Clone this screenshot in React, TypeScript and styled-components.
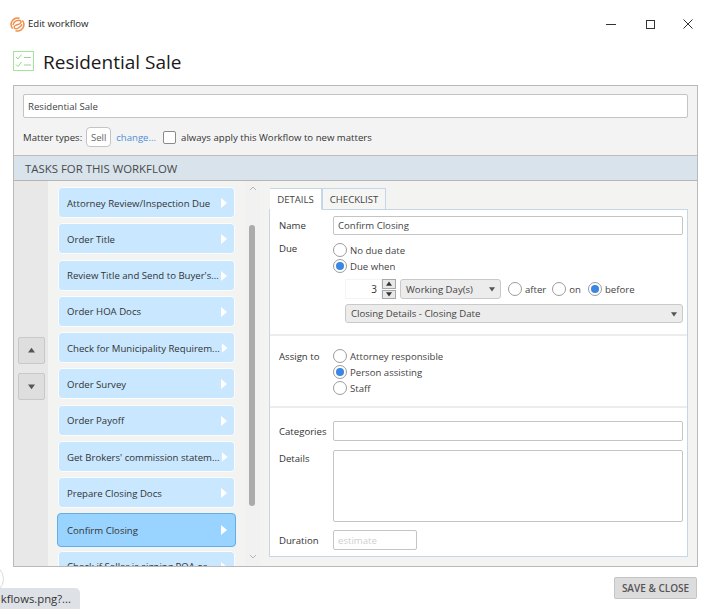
import React from "react";
import styled, { createGlobalStyle } from "styled-components";

const GlobalStyle = createGlobalStyle`
  html, body {
    margin: 0;
    padding: 0;
    background: #fff;
  }
  * {
    box-sizing: border-box;
  }
`;

const Window = styled.div`
  position: relative;
  width: 708px;
  height: 609px;
  overflow: hidden;
  background: #fff;
  color: #333;
  font-family: "Open Sans", "Noto Sans", sans-serif;
  font-size: 9.6px;
  display: flex;
  flex-direction: column;
`;

const TitleBar = styled.div`
  height: 48px;
  padding: 16px 15px 0 10px;
  display: flex;
  align-items: flex-start;
  gap: 3px;
`;

const TitleText = styled.div`
  flex: 1;
  font-size: 9.6px;
  line-height: 16px;
  color: #222;
`;

const WindowButtons = styled.div`
  display: flex;
  align-items: center;
  gap: 28.5px;
  height: 16px;
`;

const Heading = styled.div`
  height: 37px;
  padding: 0 0 9px 13px;
  display: flex;
  align-items: center;
  gap: 9px;
`;

const HeadingText = styled.h1`
  margin: 0;
  font-size: 19px;
  font-weight: 400;
  color: #1a1a1a;
`;

const HeadingIcon = styled.svg`
  flex: none;
  margin-bottom: 2px;
`;

const LogoIcon = styled.svg`
  flex: none;
  margin-top: 1px;
`;

const Panel = styled.div`
  margin-left: 13px;
  width: 685px;
  height: 482px;
  border: 1px solid #b9b9b9;
  background: #f3f3f1;
  display: flex;
  flex-direction: column;
  overflow: hidden;
`;

const PanelTop = styled.div`
  height: 69px;
  padding: 8px 9px 0;
  background: #f3f3f3;
`;

const TextInput = styled.div<{ $width?: number; $height?: number }>`
  width: ${({ $width }) => ($width ? `${$width}px` : "100%")};
  height: ${({ $height }) => $height || 20}px;
  flex: none;
  border: 1px solid #c4c4c4;
  border-radius: 2px;
  background: #fff;
  padding: 0 4px;
  display: flex;
  align-items: center;
  color: #444;
`;

const Placeholder = styled.span`
  color: #cfcfcf;
`;

const MatterRow = styled.div`
  margin-top: 9px;
  display: flex;
  align-items: center;
  height: 20px;
`;

const MatterTag = styled.div`
  margin-left: 4px;
  width: 25px;
  height: 20px;
  border: 1px solid #c4c4c4;
  border-radius: 4px;
  background: #fff;
  display: flex;
  align-items: center;
  justify-content: center;
  color: #666;
`;

const ChangeLink = styled.span`
  margin-left: 5px;
  color: #4f8fd6;
`;

const Checkbox = styled.div`
  margin: 0 5px 0 7px;
  width: 13px;
  height: 13px;
  border: 1px solid #8a8a8a;
  border-radius: 2px;
  background: #fff;
`;

const SectionHeader = styled.div`
  height: 26px;
  padding-left: 11px;
  display: flex;
  align-items: center;
  background: #d9e3ec;
  border-top: 1px solid #bdbdbd;
  border-bottom: 1px solid #b5b5b5;
  font-size: 11.4px;
  color: #4a4a4a;
`;

const Body = styled.div`
  flex: 1;
  min-height: 0;
  display: flex;
`;

const MoveColumn = styled.div`
  width: 34px;
  flex: none;
  background: #e8e8e8;
  padding: 156px 0 0 4px;
  display: flex;
  flex-direction: column;
  gap: 9px;
`;

const MoveButton = styled.div`
  width: 27px;
  height: 27px;
  border: 1px solid #c8c8c8;
  border-radius: 2px;
  background: #dedede;
  display: flex;
  align-items: center;
  justify-content: center;
`;

const TaskList = styled.div`
  width: 197px;
  flex: none;
  padding: 6px 0 0 10px;
  display: flex;
  flex-direction: column;
  gap: 5.3px;
  overflow: hidden;
`;

const TaskItem = styled.div<{ $selected?: boolean }>`
  width: ${({ $selected }) => ($selected ? 179 : 177)}px;
  height: ${({ $selected }) => ($selected ? 34 : 31)}px;
  margin: ${({ $selected }) => ($selected ? "-1px 0 -1px -1px" : "0")};
  flex: none;
  padding: 1px ${({ $selected }) => ($selected ? 6 : 5)}px 0 ${({ $selected }) => ($selected ? 9 : 8)}px;
  display: flex;
  align-items: center;
  justify-content: space-between;
  border: 1px solid ${({ $selected }) => ($selected ? "#62ade8" : "#fafcfe")};
  border-radius: 4px;
  background: ${({ $selected }) => ($selected ? "#99d3ff" : "#c9e8ff")};
  color: #333;
`;

const TaskName = styled.span`
  white-space: nowrap;
`;

const ScrollTrack = styled.div`
  position: relative;
  width: 15px;
  flex: none;
  background: #f1f1f1;
  display: flex;
  flex-direction: column;
  align-items: center;
  justify-content: space-between;
  padding: 5px 0 7px;
`;

const ScrollThumb = styled.div`
  position: absolute;
  top: 44px;
  left: 4px;
  width: 6px;
  height: 281px;
  border-radius: 3px;
  background: #ababab;
`;

const DetailColumn = styled.div`
  flex: 1;
  min-width: 0;
  padding: 7px 9px 9px 9px;
  display: flex;
  flex-direction: column;
`;

const Tabs = styled.div`
  display: flex;
  height: 22px;
  flex: none;
  margin-bottom: -1px;
  position: relative;
`;

const Tab = styled.div<{ $active?: boolean }>`
  width: ${({ $active }) => ($active ? 52 : 64)}px;
  margin-left: ${({ $active }) => ($active ? 1 : 0)}px;
  border: 1px solid #c5d6e6;
  border-left-width: ${({ $active }) => ($active ? 0 : 1)}px;
  border-bottom-color: ${({ $active }) => ($active ? "#fff" : "#c5d6e6")};
  background: ${({ $active }) => ($active ? "#fff" : "#f5f5f3")};
  display: flex;
  align-items: center;
  justify-content: center;
  color: #444;
`;

const DetailBox = styled.div`
  flex: 1;
  min-height: 0;
  border: 1px solid #c5d6e6;
  background: #fff;
  display: flex;
  flex-direction: column;
`;

const Section = styled.div<{ $height: number; $last?: boolean }>`
  height: ${({ $height }) => $height}px;
  flex: none;
  padding: 6px 4px 0 9px;
  border-bottom: ${({ $last }) => ($last ? "none" : "2px solid #ececec")};
`;

const Row = styled.div<{ $gap?: number }>`
  display: flex;
  margin-top: ${({ $gap }) => $gap || 0}px;
`;

const Label = styled.div<{ $top?: number }>`
  width: 54px;
  flex: none;
  line-height: 18px;
  color: #333;
  margin-top: ${({ $top }) => $top || 0}px;
`;

const RadioStack = styled.div`
  display: flex;
  flex-direction: column;
`;

const RadioOption = styled.div<{ $gap?: number }>`
  height: 16px;
  display: flex;
  align-items: center;
  gap: 3px;
  margin-right: ${({ $gap }) => $gap || 0}px;
  color: #444;
`;

const RadioCircle = styled.span<{ $checked?: boolean }>`
  width: 14px;
  height: 14px;
  flex: none;
  border: 1px solid #9c9c9c;
  border-radius: 50%;
  background: #fff;
  display: flex;
  align-items: center;
  justify-content: center;
  &::after {
    content: "";
    width: 8px;
    height: 8px;
    border-radius: 50%;
    background: ${({ $checked }) => ($checked ? "#3a86e0" : "transparent")};
  }
`;

const DueSettings = styled.div`
  margin: 5px 0 0 66px;
`;

const SpinRow = styled.div`
  height: 20px;
  display: flex;
  align-items: center;
`;

const SpinValue = styled.div`
  width: 37px;
  height: 20px;
  padding-right: 4px;
  background: #fff;
  border: 1px solid #f4f4f4;
  display: flex;
  align-items: center;
  justify-content: flex-end;
  font-size: 10px;
`;

const SpinButtons = styled.div`
  width: 14px;
  height: 20px;
  margin-right: 4px;
  display: flex;
  flex-direction: column;
  gap: 1px;
`;

const SpinButton = styled.div`
  flex: 1;
  border: 1px solid #a8a8a8;
  background: #e8e8e8;
  display: flex;
  align-items: center;
  justify-content: center;
`;

const SelectBox = styled.div<{ $width: number; $height?: number }>`
  width: ${({ $width }) => $width}px;
  height: ${({ $height }) => $height || 20}px;
  flex: none;
  padding: 0 5px;
  border: 1px solid #c9c9c9;
  border-radius: 3px;
  background: #ececec;
  display: flex;
  align-items: center;
  justify-content: space-between;
  color: #444;
`;

const TimingOptions = styled.div`
  margin-left: 7px;
  display: flex;
`;

const SecondSelect = styled.div`
  margin-top: 5px;
`;

const SaveRow = styled.div`
  margin-top: 10px;
  width: 697px;
  display: flex;
  justify-content: flex-end;
`;

const SaveButton = styled.div`
  width: 83px;
  height: 22px;
  border: 1px solid #c4c4c4;
  border-radius: 2px;
  background: #dcdcdc;
  display: flex;
  align-items: center;
  justify-content: center;
  font-size: 10px;
  font-weight: 600;
  color: #555;
`;

const StatusTip = styled.div`
  position: absolute;
  left: 0;
  bottom: 0;
  width: 80px;
  height: 21px;
  border-top-right-radius: 5px;
  background: #dee1e6;
  color: #333;
  font-size: 11.3px;
  line-height: 21px;
  white-space: nowrap;
  display: flex;
  justify-content: flex-end;
  padding-right: 9px;
`;

const CornerArc = styled.div`
  position: absolute;
  left: -26px;
  top: 564px;
  width: 30px;
  height: 30px;
  border: 1px solid #dcdcdc;
  border-radius: 50%;
`;

const tasks = [
  "Attorney Review/Inspection Due",
  "Order Title",
  "Review Title and Send to Buyer's...",
  "Order HOA Docs",
  "Check for Municipality Requirem...",
  "Order Survey",
  "Order Payoff",
  "Get Brokers' commission statem...",
  "Prepare Closing Docs",
  "Confirm Closing",
  "Check if Seller is signing POA or...",
];

const Triangle = ({ dir, color, size = 7 }: { dir: "up" | "down" | "right"; color: string; size?: number }) => {
  const points = dir === "up" ? "0,8 5,1 10,8" : dir === "down" ? "0,2 10,2 5,9" : "2,0 8,5 2,10";
  return (
    <svg width={size} height={size} viewBox="0 0 10 10">
      <polygon points={points} fill={color} />
    </svg>
  );
};

const Chevron = ({ up }: { up?: boolean }) => (
  <svg width="8" height="5" viewBox="0 0 8 5" fill="none" stroke="#b5b5b5" strokeWidth="1">
    <path d={up ? "M1 4L4 1L7 4" : "M1 1L4 4L7 1"} />
  </svg>
);

const Logo = () => (
  <LogoIcon width="15" height="15" viewBox="0 0 15 15" fill="none" stroke="#f0924f" strokeWidth="1.5">
    <path d="M2.600 11.600A6.500 6.500 0 0 1 9.500 1.300" />
    <path d="M12.400 3.400A6.500 6.500 0 0 1 5.500 13.700" />
    <path d="M3 8.200C3.600 5.200 6 3.400 9 3.300C10.500 3.300 11.400 4.300 11 5.600C10.400 7.400 7.500 7.600 5.600 8.400C4.200 9 3.800 10.200 4.600 11.200C5.400 12 6.500 11.900 7.800 11.400C9.500 10.800 11 9.600 12 7.400" />
  </LogoIcon>
);

const ChecklistIcon = () => (
  <HeadingIcon width="21" height="20" viewBox="0 0 21 20" fill="none">
    <rect x="0.500" y="0.500" width="20" height="19" stroke="#a6e39a" />
    <path d="M3 6L5 8L8.500 3.500M3 13.500L5 15.500L8.500 11" stroke="#96dc88" />
    <path d="M11 6.500H18M11 14H18" stroke="#a9c9a4" />
  </HeadingIcon>
);

const App = () => {
  return (
    <Window>
      <GlobalStyle />
      <TitleBar>
        <Logo />
        <TitleText>Edit workflow</TitleText>
        <WindowButtons>
          <svg width="10" height="10" viewBox="0 0 10 10" stroke="#333" fill="none">
            <path d="M0 5.500H10" />
          </svg>
          <svg width="10" height="10" viewBox="0 0 10 10" stroke="#333" fill="none">
            <rect x="1.500" y="1.500" width="8" height="8" />
          </svg>
          <svg width="10" height="10" viewBox="0 0 10 10" stroke="#333" fill="none">
            <path d="M0.500 0.500L9.500 9.500M9.500 0.500L0.500 9.500" />
          </svg>
        </WindowButtons>
      </TitleBar>
      <Heading>
        <ChecklistIcon />
        <HeadingText>Residential Sale</HeadingText>
      </Heading>
      <Panel>
        <PanelTop>
          <TextInput $height={24}>Residential Sale</TextInput>
          <MatterRow>
            Matter types:
            <MatterTag>Sell</MatterTag>
            <ChangeLink>change...</ChangeLink>
            <Checkbox />
            always apply this Workflow to new matters
          </MatterRow>
        </PanelTop>
        <SectionHeader>TASKS FOR THIS WORKFLOW</SectionHeader>
        <Body>
          <MoveColumn>
            <MoveButton>
              <Triangle dir="up" color="#555" />
            </MoveButton>
            <MoveButton>
              <Triangle dir="down" color="#555" />
            </MoveButton>
          </MoveColumn>
          <TaskList>
            {tasks.map((task) => (
              <TaskItem key={task} $selected={task === "Confirm Closing"}>
                <TaskName>{task}</TaskName>
                <Triangle dir="right" color="#fff" size={10} />
              </TaskItem>
            ))}
          </TaskList>
          <ScrollTrack>
            <Chevron up />
            <ScrollThumb />
            <Chevron />
          </ScrollTrack>
          <DetailColumn>
            <Tabs>
              <Tab $active>DETAILS</Tab>
              <Tab>CHECKLIST</Tab>
            </Tabs>
            <DetailBox>
              <Section $height={126}>
                <Row>
                  <Label $top={1}>Name</Label>
                  <TextInput $width={350} $height={19}>Confirm Closing</TextInput>
                </Row>
                <Row $gap={7}>
                  <Label $top={-2}>Due</Label>
                  <RadioStack>
                    <RadioOption>
                      <RadioCircle />
                      No due date
                    </RadioOption>
                    <RadioOption>
                      <RadioCircle $checked />
                      Due when
                    </RadioOption>
                  </RadioStack>
                </Row>
                <DueSettings>
                  <SpinRow>
                    <SpinValue>3</SpinValue>
                    <SpinButtons>
                      <SpinButton>
                        <Triangle dir="up" color="#333" size={6} />
                      </SpinButton>
                      <SpinButton>
                        <Triangle dir="down" color="#333" size={6} />
                      </SpinButton>
                    </SpinButtons>
                    <SelectBox $width={101}>
                      Working Day(s)
                      <Triangle dir="down" color="#555" size={6} />
                    </SelectBox>
                    <TimingOptions>
                      <RadioOption $gap={6}>
                        <RadioCircle />
                        after
                      </RadioOption>
                      <RadioOption $gap={7}>
                        <RadioCircle />
                        on
                      </RadioOption>
                      <RadioOption>
                        <RadioCircle $checked />
                        before
                      </RadioOption>
                    </TimingOptions>
                  </SpinRow>
                  <SecondSelect>
                    <SelectBox $width={338} $height={19}>
                      Closing Details - Closing Date
                      <Triangle dir="down" color="#555" size={6} />
                    </SelectBox>
                  </SecondSelect>
                </DueSettings>
              </Section>
              <Section $height={72}>
                <Row $gap={6}>
                  <Label>Assign to</Label>
                  <RadioStack>
                    <RadioOption>
                      <RadioCircle />
                      Attorney responsible
                    </RadioOption>
                    <RadioOption>
                      <RadioCircle $checked />
                      Person assisting
                    </RadioOption>
                    <RadioOption>
                      <RadioCircle />
                      Staff
                    </RadioOption>
                  </RadioStack>
                </Row>
              </Section>
              <Section $height={146} $last>
                <Row $gap={7}>
                  <Label $top={2}>Categories</Label>
                  <TextInput $width={350} />
                </Row>
                <Row $gap={9}>
                  <Label>Details</Label>
                  <TextInput $width={350} $height={72} />
                </Row>
                <Row $gap={8}>
                  <Label $top={2}>Duration</Label>
                  <TextInput $width={84}>
                    <Placeholder>estimate</Placeholder>
                  </TextInput>
                </Row>
              </Section>
            </DetailBox>
          </DetailColumn>
        </Body>
      </Panel>
      <SaveRow>
        <SaveButton>SAVE &amp; CLOSE</SaveButton>
      </SaveRow>
      <CornerArc />
      <StatusTip>kflows.png?...</StatusTip>
    </Window>
  );
};

export default App;
